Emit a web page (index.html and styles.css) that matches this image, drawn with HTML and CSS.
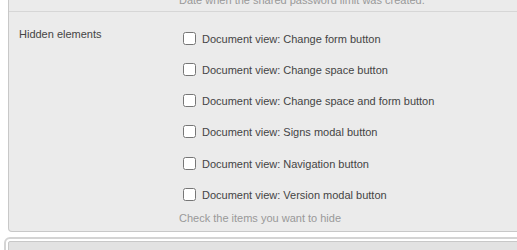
FILE: index.html
```html
<!DOCTYPE html>
<html lang="en">
<head>
    <meta charset="UTF-8">
    <title>Settings</title>
    <link rel="stylesheet" href="styles.css">
</head>
<body>
    <div class="panel">
        <div class="row row-prev">
            <div class="label"></div>
            <div class="field">
                <p class="help">Date when the shared password limit was created.</p>
            </div>
        </div>

        <div class="row">
            <div class="label">Hidden elements</div>
            <div class="field">
                <ul class="checks">
                    <li><label><input type="checkbox"> Document view: Change form button</label></li>
                    <li><label><input type="checkbox"> Document view: Change space button</label></li>
                    <li><label><input type="checkbox"> Document view: Change space and form button</label></li>
                    <li><label><input type="checkbox"> Document view: Signs modal button</label></li>
                    <li><label><input type="checkbox"> Document view: Navigation button</label></li>
                    <li><label><input type="checkbox"> Document view: Version modal button</label></li>
                </ul>
                <p class="help">Check the items you want to hide</p>
            </div>
        </div>
    </div>

    <div class="panel-next">
        <div class="panel-inner"></div>
    </div>
</body>
</html>
```

FILE: styles.css
```css
body {
    margin: 0;
    padding: 0 0 0 8px;
    background: #fff;
    font-family: "Liberation Sans", Arial, sans-serif;
    font-size: 11px;
    color: #444;
    overflow: hidden;
}

.panel {
    background-color: #ebebeb;
    border: 1px solid #c8c8c8;
    border-top: none;
    border-radius: 0 0 4px 4px;
    margin-top: -10px;
    margin-right: -20px;
}

.row {
    display: flex;
    padding: 0 10px;
}

.row-prev {
    border-bottom: 1px solid #d6d6d6;
    height: 21px;
}

.label {
    width: 160px;
    padding-top: 16px;
    color: #444;
}

.row-prev .field .help {
    margin: 4px 0 0;
}

.field {
    flex: 1;
}

.checks {
    list-style: none;
    margin: 0;
    padding: 20px 0 0 4px;
}

.checks li {
    height: 31px;
}

.checks li:nth-child(5) {
    margin-top: 1px;
}

.checks label {
    display: flex;
    align-items: center;
    gap: 6px;
}

.checks input {
    margin: 0;
    width: 13px;
    height: 13px;
}

.help {
    color: #999;
    margin: -7px 0 7px;
}

.panel-next {
    margin: 5px -20px 0 -4px;
    border: 2px solid #d4d4d4;
    border-radius: 6px;
    padding: 2px;
    height: 40px;
}

.panel-inner {
    background: #e2e2e2;
    border: 1px solid #c8c8c8;
    border-radius: 2px;
    height: 40px;
}
```
